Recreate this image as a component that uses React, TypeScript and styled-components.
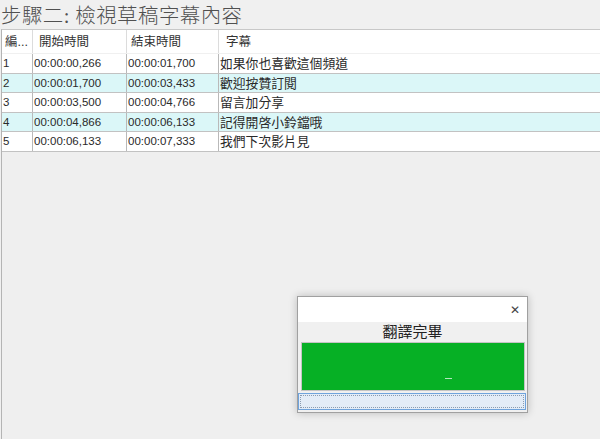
import React from "react";
import styled, { createGlobalStyle } from "styled-components";

const GlobalStyle = createGlobalStyle`
  html, body, #root {
    height: 100%;
  }
  body {
    margin: 0;
    overflow: hidden;
    background: #f0f0f0;
  }
`;

type Row = { no: string; start: string; end: string; text: string };

const rows: Row[] = [
  { no: "1", start: "00:00:00,266", end: "00:00:01,700", text: "如果你也喜歡這個頻道" },
  { no: "2", start: "00:00:01,700", end: "00:00:03,433", text: "歡迎按贊訂閱" },
  { no: "3", start: "00:00:03,500", end: "00:00:04,766", text: "留言加分享" },
  { no: "4", start: "00:00:04,866", end: "00:00:06,133", text: "記得開啓小鈴鐺哦" },
  { no: "5", start: "00:00:06,133", end: "00:00:07,333", text: "我們下次影片見" },
];

const App = () => {
  return (
    <Page>
      <GlobalStyle />
      <Title>步驟二: 檢視草稿字幕內容</Title>
      <Grid>
        <HeaderRow>
          <HeadCell>編...</HeadCell>
          <HeadCell $pad={6}>開始時間</HeadCell>
          <HeadCell $pad={4}>結束時間</HeadCell>
          <HeadCell $pad={7}>字幕</HeadCell>
        </HeaderRow>
        {rows.map((r, i) => (
          <DataRow key={r.no} $alt={i % 2 === 1}>
            <Cell>{r.no}</Cell>
            <Cell>{r.start}</Cell>
            <Cell>{r.end}</Cell>
            <Cell $cjk>{r.text}</Cell>
          </DataRow>
        ))}
      </Grid>

      <Dialog>
        <DialogBar>
          <CloseButton>✕</CloseButton>
        </DialogBar>
        <DialogBody>
          <DoneLabel>翻譯完畢</DoneLabel>
          <Progress>
            <Glint />
          </Progress>
          <FocusBox />
        </DialogBody>
      </Dialog>
    </Page>
  );
};

const Page = styled.div`
  position: relative;
  height: 100%;
  display: flex;
  flex-direction: column;
  background: #f0f0f0;
`;
const Title = styled.div`
  height: 29px;
  padding-left: 1px;
  font-family: "Liberation Serif", "Noto Sans CJK TC", serif;
  font-size: 20.5px;
  font-weight: 300;
  line-height: 33px;
  letter-spacing: 0.4px;
  color: #505050;
  white-space: nowrap;
  overflow: hidden;
`;
const Grid = styled.div`
  flex: 1;
  margin-left: 1px;
  border-top: 1px solid #c8c8c8;
  border-left: 1px solid #b4b4b4;
  background: #efefef;
  font-family: "Liberation Sans", "Noto Sans CJK TC", sans-serif;
  color: #2a2a2a;
`;
const columns = "30px 94px 92px 1fr";
const HeaderRow = styled.div`
  display: grid;
  grid-template-columns: ${columns};
  height: 23px;
  background: #fff;
  border-bottom: 1px solid #f0f0f0;
`;
const HeadCell = styled.div<{ $pad?: number }>`
  padding-left: ${(p) => p.$pad ?? 3}px;
  font-size: 12.5px;
  line-height: 24px;
  white-space: nowrap;
  overflow: hidden;
  color: #333;
  & + & {
    border-left: 1px solid #dcdcdc;
  }
`;
const DataRow = styled.div<{ $alt: boolean }>`
  display: grid;
  grid-template-columns: ${columns};
  height: 18.5px;
  background: ${(p) => (p.$alt ? "#dbf7f8" : "#fff")};
  border-bottom: 1px solid #c2c2c2;
`;
const Cell = styled.div<{ $cjk?: boolean }>`
  padding-left: 1px;
  font-size: ${(p) => (p.$cjk ? 12.8 : 11.5)}px;
  line-height: 19px;
  white-space: nowrap;
  overflow: hidden;
  & + & {
    border-left: 1px solid #b9b9b9;
  }
`;
const Dialog = styled.div`
  position: absolute;
  left: 297px;
  top: 296px;
  width: 229px;
  height: 115px;
  border: 1px solid #a0a0a0;
  box-shadow: 0 0 8px rgba(0, 0, 0, 0.22);
  background: #f0f0f0;
  display: flex;
  flex-direction: column;
`;
const DialogBar = styled.div`
  height: 25px;
  background: #fff;
  display: flex;
  align-items: center;
  justify-content: flex-end;
  padding-right: 7px;
`;
const CloseButton = styled.span`
  font-family: "DejaVu Sans", sans-serif;
  font-size: 12px;
  color: #444;
  line-height: 1;
`;
const DialogBody = styled.div`
  flex: 1;
  display: flex;
  flex-direction: column;
`;
const DoneLabel = styled.div`
  height: 20px;
  text-align: center;
  font-family: "Liberation Sans", "Noto Sans CJK TC", sans-serif;
  font-size: 15px;
  line-height: 20px;
  color: #222;
`;
const Progress = styled.div`
  position: relative;
  height: 47px;
  margin: 0 2px 0 3px;
  background: #06b025;
  border: 1px solid #c4c4c4;
`;
const Glint = styled.span`
  position: absolute;
  left: 143px;
  top: 35px;
  width: 7px;
  height: 1px;
  background: rgba(255, 255, 255, 0.7);
`;
const FocusBox = styled.div`
  height: 15px;
  margin: 2px 1px 0 0;
  background: #e3ecf7;
  border: 1px solid #6fa3dc;
  outline: 1px dotted #8a9bb0;
  outline-offset: -3px;
`;

export default App;
